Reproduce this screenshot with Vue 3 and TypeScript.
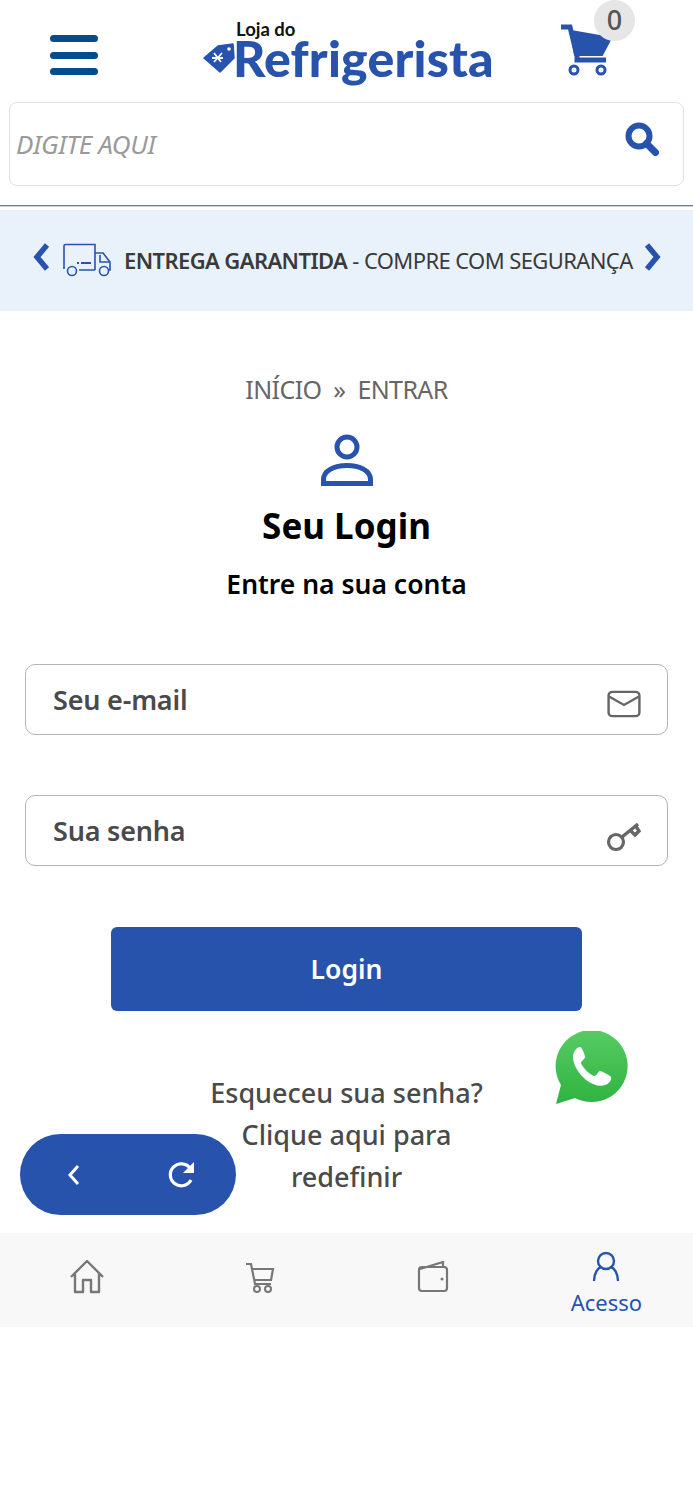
<script setup lang="ts">
const navItems = [
  { id: 'home', label: '' },
  { id: 'cart', label: '' },
  { id: 'wallet', label: '' },
  { id: 'user', label: 'Acesso' },
];
</script>

<template>
  <div class="page">
    <header class="top">
      <button class="burger" aria-label="Menu">
        <span></span><span></span><span></span>
      </button>
      <div class="logo">
        <span class="logo-small">Loja do</span>
        <div class="logo-row">
          <svg class="tag" viewBox="0 0 32 30" width="32" height="30">
            <path d="M1 15 15 3l15-2 1 14-14 14z" fill="#2753ad" stroke="#2753ad" stroke-linejoin="round" stroke-width="1.5" />
            <circle cx="26" cy="6" r="1.800" fill="#fff" />
            <path d="M11 10l7 9M19 10l-8 9M9 15h11" stroke="#fff" stroke-width="1.800" fill="none" />
          </svg>
          <span class="logo-big">Refrigerista</span>
        </div>
      </div>
      <div class="cart">
        <svg viewBox="0 0 52 52" width="52" height="52">
          <path d="M11 7 51 14 42 31H15z" fill="#2753ad" stroke="#2753ad" stroke-width="2" stroke-linejoin="round" />
          <path d="M1 3h9l7 29v4h29" fill="none" stroke="#2753ad" stroke-width="5" />
          <circle cx="14" cy="46" r="4" fill="#fff" stroke="#2753ad" stroke-width="3" />
          <circle cx="41" cy="46" r="4" fill="#fff" stroke="#2753ad" stroke-width="3" />
        </svg>
        <span class="badge">0</span>
      </div>
    </header>

    <div class="search">
      <span class="search-text">DIGITE AQUI</span>
      <svg viewBox="0 0 34 34" width="34" height="34">
        <circle cx="14" cy="14" r="10.500" fill="none" stroke="#2753ad" stroke-width="6" />
        <path d="M21.500 21.500 30.500 30.500" stroke="#2753ad" stroke-width="7" stroke-linecap="round" />
      </svg>
    </div>

    <div class="rule"></div>

    <div class="promo">
      <svg class="chev" viewBox="0 0 18 28" width="18" height="28">
        <path d="M15 2 5 14l10 12" fill="none" stroke="#2753ad" stroke-width="5.500" />
      </svg>
      <svg viewBox="0 0 50 34" width="50" height="34" class="truck">
        <g fill="none" stroke="#2753ad" stroke-width="1.600">
          <path d="M2 25V3c0-1 .6-1.500 1.500-1.500H33V27" />
          <path d="M1 25h2M17 27h16M33 10h8l7 9v8h-1" />
          <path d="M38 12v7h9" />
          <circle cx="10" cy="28" r="4.500" />
          <circle cx="42" cy="28" r="4.500" />
          <path d="M19 20h10M15 20h2" stroke-width="1.800" />
        </g>
      </svg>
      <span class="promo-text"><b>ENTREGA GARANTIDA</b> - COMPRE COM SEGURANÇA</span>
      <svg class="chev" viewBox="0 0 18 28" width="18" height="28">
        <path d="M3 2l10 12L3 26" fill="none" stroke="#2753ad" stroke-width="5.500" />
      </svg>
    </div>

    <main class="login">
      <p class="crumbs">INÍCIO <i>»</i> ENTRAR</p>
      <svg class="person" viewBox="0 0 52 52" width="52" height="52">
        <circle cx="26" cy="13" r="10" fill="none" stroke="#2753ad" stroke-width="5" />
        <path d="M2.500 49.500v-4c0-9 11-14 23.500-14s23.500 5 23.500 14v4z" fill="none" stroke="#2753ad" stroke-width="5" />
      </svg>
      <h1>Seu Login</h1>
      <h2>Entre na sua conta</h2>

      <div class="field first">
        <span>Seu e-mail</span>
        <svg viewBox="0 0 36 30" width="34" height="28">
          <rect x="1.500" y="2" width="33" height="26" rx="4" fill="none" stroke="#666" stroke-width="2.600" />
          <path d="M2 7l16 9 16-9" fill="none" stroke="#666" stroke-width="2.600" />
        </svg>
      </div>
      <div class="field">
        <span>Sua senha</span>
        <svg viewBox="0 0 36 36" width="36" height="36">
          <circle cx="11" cy="25" r="7.500" fill="none" stroke="#666" stroke-width="3.200" />
          <path d="M17 20 33 7M25 13l5 5 4-4-4-6" fill="none" stroke="#666" stroke-width="3.400" />
        </svg>
      </div>

      <button class="submit">Login</button>

      <p class="forgot">Esqueceu sua senha? Clique aqui para redefinir</p>
    </main>

    <nav class="tabs">
      <div v-for="item in navItems" :key="item.id" class="tab" :class="{ active: item.label }">
        <svg v-if="item.id === 'home'" viewBox="0 0 36 36" width="36" height="36">
          <path d="M2 18 18 2l16 16M6 15v18h8V21h8v12h8V15" fill="none" stroke="#777" stroke-width="2.400" stroke-linejoin="round" />
        </svg>
        <svg v-else-if="item.id === 'cart'" viewBox="0 0 32 32" width="32" height="32">
          <path d="M2 3h5l4 20h16M8 8h21l-2 11H10" fill="none" stroke="#777" stroke-width="2.200" />
          <circle cx="13" cy="28" r="3" fill="none" stroke="#777" stroke-width="2" />
          <circle cx="24" cy="28" r="3" fill="none" stroke="#777" stroke-width="2" />
        </svg>
        <svg v-else-if="item.id === 'wallet'" viewBox="0 0 32 32" width="32" height="32">
          <rect x="2" y="6" width="28" height="24" rx="3" fill="none" stroke="#777" stroke-width="2.200" />
          <path d="M3 8 26 1v5" fill="none" stroke="#777" stroke-width="2.200" />
          <circle cx="25" cy="18" r="1.500" fill="#777" />
        </svg>
        <svg v-else viewBox="0 0 28 32" width="28" height="32">
          <circle cx="14" cy="10" r="8" fill="none" stroke="#2753ad" stroke-width="2.400" />
          <path d="M2 30c0-8 4-13 7-14M26 30c0-8-4-13-7-14" fill="none" stroke="#2753ad" stroke-width="2.400" />
        </svg>
        <span v-if="item.label">{{ item.label }}</span>
      </div>
    </nav>

    <div class="pill">
      <svg viewBox="0 0 16 24" width="16" height="24">
        <path d="M12 3 4 12l8 9" fill="none" stroke="#fff" stroke-width="3" />
      </svg>
      <svg viewBox="0 0 30 30" width="30" height="30">
        <path d="M24 20a11 11 0 1 1-1-12" fill="none" stroke="#fff" stroke-width="3.200" />
        <path d="M27 2v11H16z" fill="#fff" />
      </svg>
    </div>

    <svg class="whats" viewBox="0 0 74 74" width="74" height="74">
      <defs>
        <linearGradient id="wa" x1="0" y1="0" x2="0" y2="1">
          <stop offset="0" stop-color="#57cb63" />
          <stop offset="1" stop-color="#2fb340" />
        </linearGradient>
      </defs>
      <path d="M1 73l5-19A36 36 0 1 1 20 67z" fill="url(#wa)" />
      <path d="M25 16c-2 0-7 3-7 10 0 8 6 17 13 23 7 5 14 7 19 5 4-1 7-5 6-8 0-1-9-6-11-6-2 0-3 5-6 5-4-1-12-9-13-13 0-2 4-4 4-6 0-2-3-10-5-10z" fill="#fff" />
    </svg>
  </div>
</template>

<style scoped>
.page {
  position: relative;
  width: 693px;
  height: 1500px;
  background: #fff;
  font-family: "Noto Sans", Arial, sans-serif;
  overflow: hidden;
}

.top {
  height: 102px;
  display: grid;
  grid-template-columns: 203px 290px 1fr;
  align-items: start;
}

.burger {
  margin: 35px 0 0 50px;
  padding: 0;
  width: 48px;
  height: 40px;
  border: none;
  background: none;
  display: flex;
  flex-direction: column;
  justify-content: space-between;
}

.burger span {
  display: block;
  height: 7px;
  border-radius: 4px;
  background: #064b8c;
}

.logo {
  padding-top: 20px;
  display: flex;
  flex-direction: column;
}

.logo-small {
  margin-left: 33px;
  font-family: "Lato", sans-serif;
  font-weight: 700;
  font-size: 18.5px;
  line-height: 19px;
  color: #111;
}

.logo-row {
  display: flex;
  align-items: center;
  height: 38px;
}

.tag {
  flex: none;
  margin-right: -2px;
}

.logo-big {
  font-family: "Lato", sans-serif;
  font-weight: 900;
  font-size: 50px;
  line-height: 38px;
  letter-spacing: 0.2px;
  color: #2753ad;
}

.cart {
  position: relative;
  padding: 24px 0 0 67px;
}

.badge {
  position: absolute;
  left: 101px;
  top: 0;
  width: 41px;
  height: 41px;
  border-radius: 50%;
  background: #e6e6e6;
  color: #555;
  font-size: 27px;
  font-weight: 500;
  line-height: 40px;
  text-align: center;
}

.search {
  margin: 0 9px;
  height: 84px;
  box-sizing: border-box;
  border: 1px solid #e2e2e2;
  border-radius: 8px;
  display: flex;
  align-items: center;
  justify-content: space-between;
  padding: 0 24px 0 6px;
}

.search svg {
  margin-top: -10px;
}

.search-text {
  font-style: italic;
  font-size: 26px;
  color: #9a9a9a;
  letter-spacing: -0.4px;
}

.rule {
  margin-top: 19px;
  height: 1px;
  background: #6d7d8a;
  border-bottom: 1px solid #c9d0d6;
}

.promo {
  margin-top: 3px;
  height: 101px;
  background: #e9f2fb;
  display: flex;
  align-items: center;
  padding: 0 31px 6px 32px;
  box-sizing: border-box;
}

.truck {
  margin: 4px 12px 0 12px;
}

.chev {
  flex: none;
  margin-top: -2px;
}

.promo-text {
  flex: 1;
  white-space: nowrap;
  margin-top: 4px;
  font-size: 22px;
  letter-spacing: -0.6px;
  color: #3a3a3a;
}

.promo-text b {
  font-weight: 600;
}

.login {
  display: flex;
  flex-direction: column;
  align-items: center;
  padding: 0 25px;
}

.crumbs {
  margin: 61px 0 0;
  font-size: 25px;
  line-height: 34px;
  color: #666;
  letter-spacing: -0.6px;
}

.crumbs i {
  font-style: normal;
  margin: 0 6px;
}

.person {
  margin-top: 28px;
}

h1 {
  margin: 16px 0 0;
  font-size: 35px;
  line-height: 48px;
  font-weight: 700;
  color: #000;
}

h2 {
  margin: 16px 0 0;
  font-size: 26.5px;
  line-height: 36px;
  font-weight: 600;
  color: #000;
}

.field {
  width: 100%;
  height: 71px;
  box-sizing: border-box;
  margin-top: 60px;
  padding: 0 26px 0 27px;
  border: 1px solid #b4b4b4;
  border-radius: 10px;
  display: flex;
  align-items: center;
  justify-content: space-between;
  font-size: 27px;
  font-weight: 600;
  letter-spacing: -0.2px;
  color: #4a4a4a;
}

.field.first {
  margin-top: 62px;
}

.field svg {
  margin-top: 8px;
}

.submit {
  margin-top: 61px;
  width: 471px;
  height: 84px;
  border: none;
  border-radius: 6px;
  background: #2753ad;
  color: #fff;
  font-family: inherit;
  font-size: 26.5px;
  font-weight: 600;
}

.forgot {
  margin: 61px 0 0;
  width: 300px;
  text-align: center;
  font-size: 27px;
  line-height: 42px;
  font-weight: 500;
  color: #4a4a4a;
}

.tabs {
  position: absolute;
  left: 0;
  right: 0;
  top: 1233px;
  height: 94px;
  background: #f8f8f8;
  display: grid;
  grid-template-columns: repeat(4, 1fr);
}

.tab {
  display: flex;
  flex-direction: column;
  align-items: center;
  justify-content: center;
  padding-bottom: 6px;
  box-sizing: border-box;
}

.tab.active {
  justify-content: flex-start;
  padding: 18px 0 0;
  color: #2753ad;
  font-size: 22px;
  line-height: 26px;
  gap: 6px;
}

.pill {
  position: absolute;
  left: 20px;
  top: 1134px;
  width: 216px;
  height: 81px;
  border-radius: 41px;
  background: #2753ad;
  display: flex;
  align-items: center;
  justify-content: space-between;
  padding: 0 39px 0 46px;
  box-sizing: border-box;
}

.whats {
  position: absolute;
  left: 555px;
  top: 1031px;
}
</style>
